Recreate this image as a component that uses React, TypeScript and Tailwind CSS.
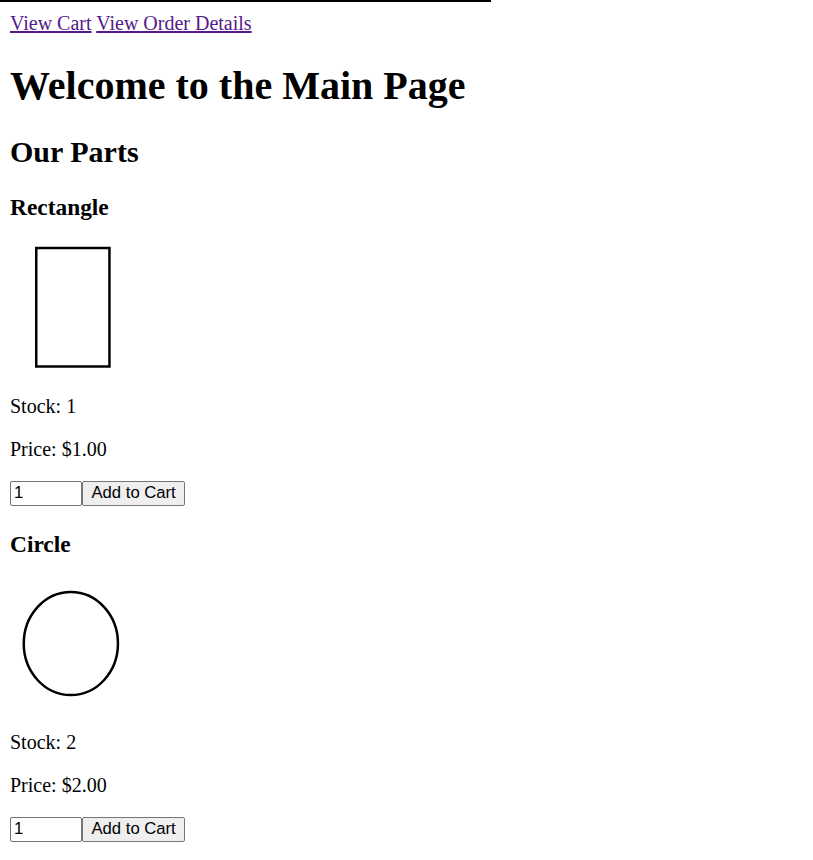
import React from "react";

function Part({ name, stock, price, shape }: { name: string; stock: number; price: string; shape: "rect" | "circle" }) {
  return (
    <div>
      <h3 className="text-[23.4px] font-bold leading-[normal] my-[23.4px]">{name}</h3>
      <div className="leading-[normal]">
        <svg width="125" height="125" className="inline-block align-baseline" viewBox="0 0 125 125">
          {shape === "rect" ? (
            <rect x="26.25" y="3" width="73.2" height="118.5" fill="white" stroke="black" strokeWidth="2.5" />
          ) : (
            <ellipse cx="60.85" cy="62.6" rx="47.1" ry="51.5" fill="white" stroke="black" strokeWidth="2.5" />
          )}
        </svg>
      </div>
      <p className="my-[20px] leading-[normal]">Stock: {stock}</p>
      <p className="my-[20px] leading-[normal]">Price: {price}</p>
      <div className="flex items-start h-[26.5px] font-['Liberation_Sans',Arial,sans-serif] text-[16.67px] leading-[normal]">
        <input
          type="number"
          defaultValue={1}
          className="w-[72px] h-[25px] border border-[#767676] rounded-[2px] px-[3px] py-[1px] bg-white text-black"
        />
        <button className="h-[25px] border border-[#767676] rounded-[2px] bg-[#efefef] px-[8.5px] py-[1px] text-black">
          Add to Cart
        </button>
      </div>
    </div>
  );
}

export default function App() {
  return (
    <div className="font-['Liberation_Serif','Times_New_Roman',serif] text-black bg-white min-h-[860px] text-[20px]">
      <div className="w-[491px] h-[2px] bg-black" />
      <div className="px-[10px]">
        <div className="mt-[9.8px] leading-[normal]">
          <a href="#" className="text-[#551a8b] underline">View Cart</a>{" "}
          <a href="#" className="text-[#551a8b] underline">View Order Details</a>
        </div>
        <h1 className="text-[40px] font-bold leading-[normal] my-[26.8px]">Welcome to the Main Page</h1>
        <h2 className="text-[30px] font-bold leading-[normal] my-[24.9px]">Our Parts</h2>
        <Part name="Rectangle" stock={1} price="$1.00" shape="rect" />
        <Part name="Circle" stock={2} price="$2.00" shape="circle" />
      </div>
    </div>
  );
}
